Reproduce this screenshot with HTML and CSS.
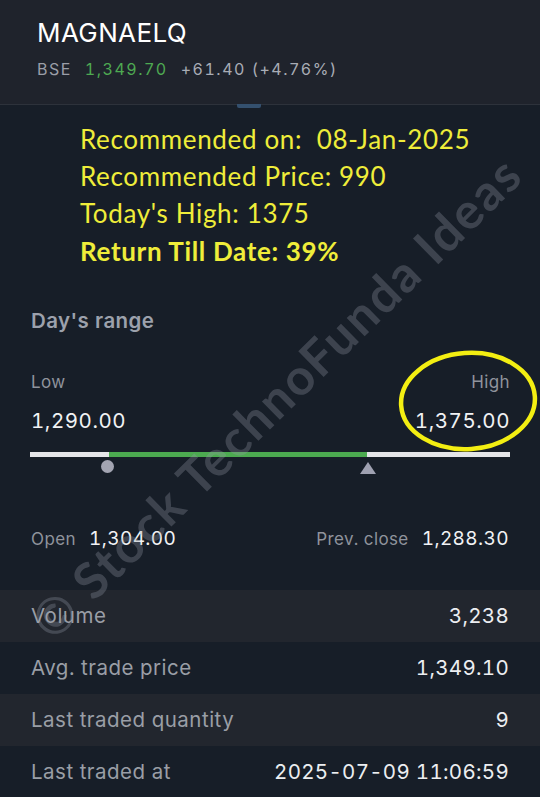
FILE: index.html
```html
<!DOCTYPE html>
<html>
<head>
<meta charset="utf-8">
<link rel="stylesheet" href="styles.css">
</head>
<body>
<div class="page">
  <header class="head">
    <div class="title">MAGNAELQ</div>
    <div class="sub">
      <span class="exch">BSE</span>
      <span class="ltp">1,349.70</span>
      <span class="chg">+61.40 (+4.76%)</span>
    </div>
  </header>
  <div class="divider"><span class="handle"></span></div>

  <section class="reco">
    <div class="reco-line">Recommended on:&nbsp; 08-Jan-2025</div>
    <div class="reco-line">Recommended Price: 990</div>
    <div class="reco-line">Today's High: 1375</div>
    <div class="reco-line strong">Return Till Date: 39%</div>
  </section>

  <section class="range">
    <div class="range-title">Day's range</div>
    <div class="range-labels">
      <span>Low</span>
      <span>High</span>
    </div>
    <div class="range-values">
      <span>1,290.00</span>
      <span>1,375.00</span>
    </div>
    <div class="bar">
      <div class="bar-seg bar-left"></div>
      <div class="bar-seg bar-green"></div>
      <div class="bar-seg bar-right"></div>
    </div>
    <div class="markers">
      <span class="dot"></span>
      <span class="tri"></span>
    </div>
  </section>

  <section class="oc">
    <div class="oc-item"><span class="oc-label">Open</span><span class="oc-val">1,304.00</span></div>
    <div class="oc-item"><span class="oc-label">Prev. close</span><span class="oc-val">1,288.30</span></div>
  </section>

  <section class="table">
    <div class="row alt"><span class="lbl">Volume</span><span class="val">3,238</span></div>
    <div class="row"><span class="lbl">Avg. trade price</span><span class="val">1,349.10</span></div>
    <div class="row alt"><span class="lbl">Last traded quantity</span><span class="val">9</span></div>
    <div class="row"><span class="lbl">Last traded at</span><span class="val">2025-07-09 11:06:59</span></div>
  </section>

  <svg class="circle" width="150" height="120" viewBox="0 0 150 120">
    <ellipse cx="71" cy="52" rx="67" ry="48" fill="none" stroke="#f3ee12" stroke-width="4.5" transform="rotate(-4 71 52)"/>
  </svg>

  <div class="watermark">© Stock TechnoFunda Ideas</div>
</div>
</body>
</html>
```

FILE: styles.css
```css
* { box-sizing: border-box; margin: 0; padding: 0; }
html, body {
  width: 540px;
  height: 797px;
  overflow: hidden;
  background: #171e28;
}
body {
  font-family: Inter, "Noto Sans", sans-serif;
  color: #eef0f3;
  font-variant-numeric: tabular-nums;
}
.page {
  position: relative;
  width: 540px;
  height: 797px;
  overflow: hidden;
}
.head {
  height: 104px;
  background: #1f232c;
  padding: 17px 0 0 37px;
}
.title {
  font-size: 26px;
  font-weight: 400;
  color: #ffffff;
  line-height: 32px;
  letter-spacing: 0.4px;
}
.sub {
  margin-top: 9.5px;
  font-size: 16px;
  line-height: 20px;
  letter-spacing: 1.5px;
  display: flex;
  gap: 13px;
}
.exch { color: #9a9ea8; }
.ltp { color: #4ea952; }
.chg { color: #a8acb5; }
.divider {
  height: 1px;
  background: #2d323b;
}
.handle {
  display: block;
  margin-left: 237px;
  width: 24px;
  height: 4px;
  background: #34506e;
  border-radius: 0 0 2px 2px;
}
.reco {
  padding: 16px 0 0 80px;
  font-family: Lato, "Open Sans", sans-serif;
  font-size: 26px;
  line-height: 37.2px;
  letter-spacing: 0.65px;
  color: #efed3a;
}
.reco-line.strong { font-weight: 700; }
.range {
  padding: 39px 30px 0 31px;
}
.range-title {
  font-size: 20.5px;
  font-weight: 600;
  color: #9ca1ac;
  line-height: 24px;
  letter-spacing: 0.4px;
}
.range-labels {
  margin-top: 38.3px;
  display: flex;
  justify-content: space-between;
  font-size: 17px;
  color: #8f939c;
  line-height: 22px;
  letter-spacing: 0.4px;
}
.range-values {
  margin-top: 14.7px;
  display: flex;
  justify-content: space-between;
  font-size: 20.5px;
  color: #f1f2f4;
  line-height: 26px;
  letter-spacing: 0.55px;
}
.bar {
  margin-top: 18.2px;
  margin-left: -1px;
  display: flex;
  height: 5px;
}
.bar-seg { height: 5px; }
.bar-left { width: 79px; background: #e4e5e8; }
.bar-green { width: 258px; background: #4caa50; }
.bar-right { flex: 1; background: #e4e5e8; }
.markers {
  height: 26px;
  display: flex;
  align-items: flex-start;
  padding-top: 3.5px;
}
.dot {
  margin-left: 69.5px;
  width: 13px;
  height: 13px;
  border-radius: 50%;
  background: #a3a5b2;
}
.tri {
  margin-left: 246px;
  margin-top: 1.5px;
  width: 0;
  height: 0;
  border-left: 8px solid transparent;
  border-right: 8px solid transparent;
  border-bottom: 12px solid #9fa1b1;
}
.oc {
  margin-top: 43.5px;
  padding: 0 31px;
  display: flex;
  justify-content: space-between;
  align-items: baseline;
  height: 26px;
  line-height: 26px;
}
.oc-item { display: flex; align-items: baseline; gap: 13px; }
.oc-label { font-size: 17px; color: #8f939c; letter-spacing: 0.4px; }
.oc-val { font-size: 19px; color: #f1f2f4; letter-spacing: 0.4px; }
.table {
  margin-top: 37.5px;
}
.row {
  height: 52px;
  display: flex;
  justify-content: space-between;
  align-items: center;
  padding: 0 31px;
  font-size: 20.5px;
  letter-spacing: 0.5px;
}
.row.alt { background: #22262e; }
.lbl { color: #9a9ea6; }
.val { color: #eceef1; letter-spacing: 0.3px; }
.circle {
  position: absolute;
  left: 397px;
  top: 349px;
}
.watermark {
  position: absolute;
  left: 276px;
  top: 397px;
  transform: translate(-50%, -50%) rotate(-44.5deg);
  white-space: nowrap;
  font-family: Lato, "Open Sans", sans-serif;
  font-weight: 700;
  font-size: 50px;
  letter-spacing: 2px;
  color: rgba(150, 156, 170, 0.3);
  pointer-events: none;
}
```
